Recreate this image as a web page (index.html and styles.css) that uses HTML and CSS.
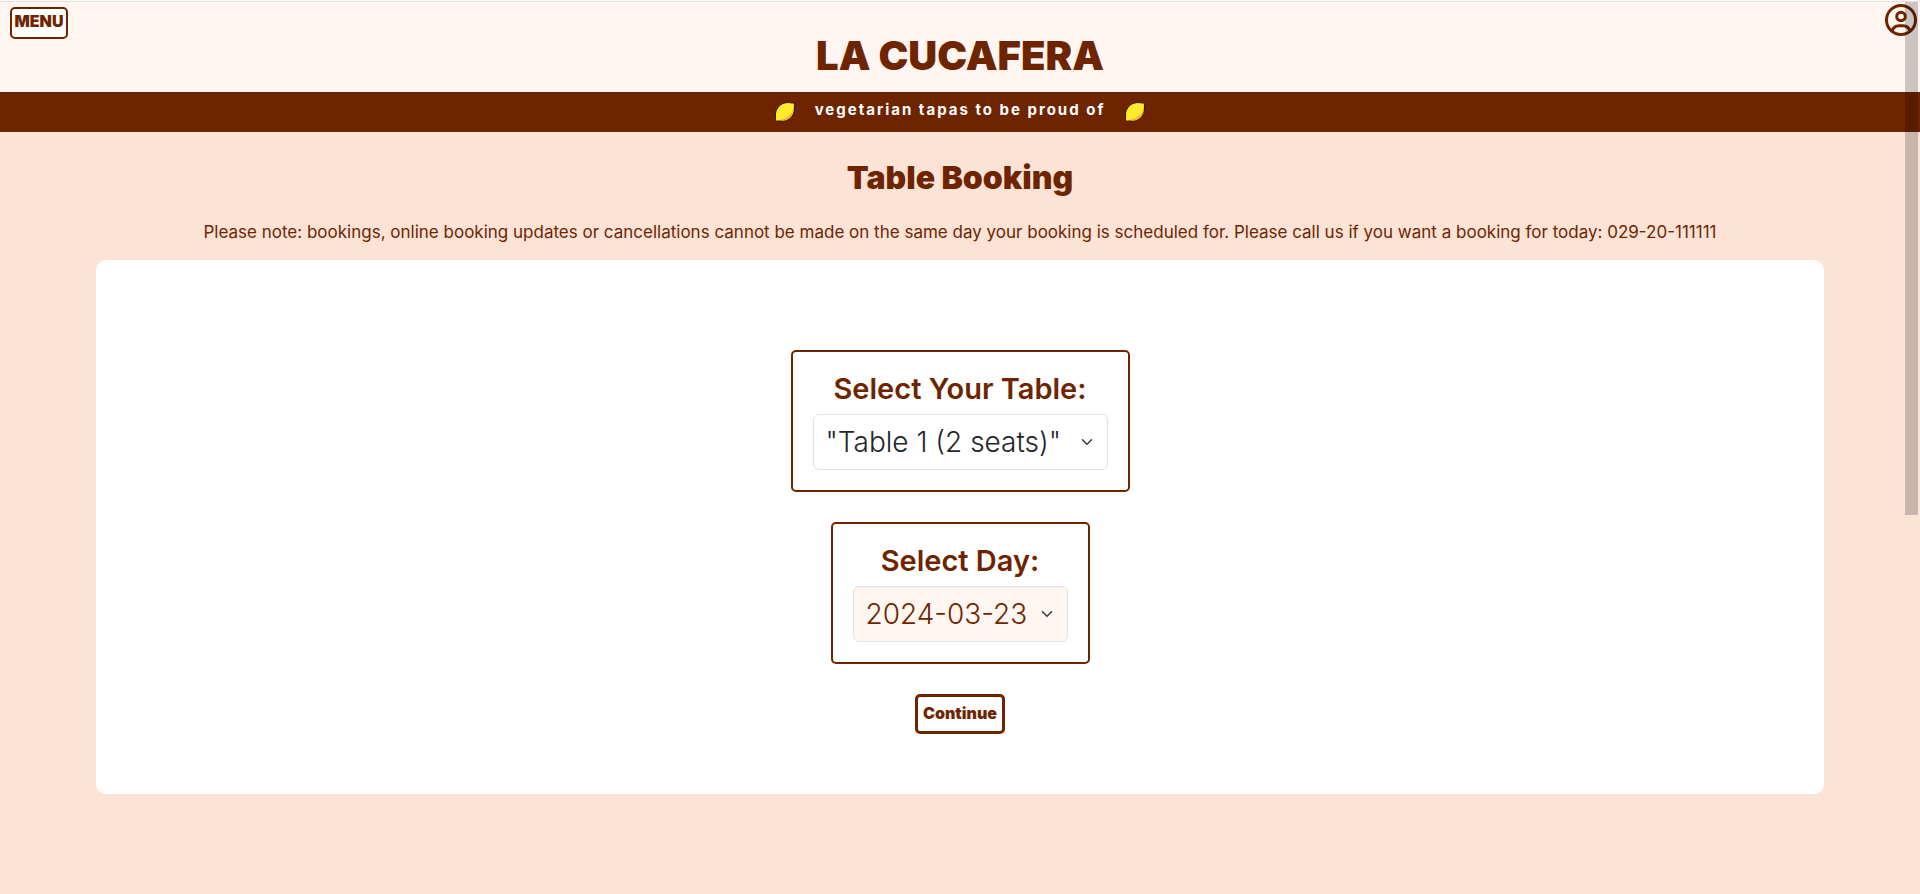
FILE: index.html
```html
<!DOCTYPE html>
<html lang="en">
<head>
<meta charset="utf-8">
<meta name="viewport" content="width=device-width, initial-scale=1">
<title>La Cucafera - Table Booking</title>
<link rel="stylesheet" href="styles.css">
</head>
<body>
<svg class="symbols" aria-hidden="true">
  <symbol id="lemon" viewBox="0 0 20 20">
    <path d="M1 19C0 17.500 .5 16 .5 14C.3 10 1.500 6.500 4.500 3.800C8 .8 12 .2 15.500 1C17 1.300 18.500 .8 19.300 1.200C19.800 2.500 19.200 4 19.500 6C19.700 10 18.500 13.500 15.500 16.200C12 19.300 8 19.800 4.500 19C3 18.700 2 19.300 1 19Z" fill="#f6b13a" stroke="#2d1606" stroke-width="1"/>
    <path d="M1.500 18.400C1 17 1.200 15.500 1 13.800C1 10.200 2.200 6.800 4.900 4.300C8 1.500 12 .9 15.300 1.600C16.800 1.900 17.800 1.500 18.700 1.700C18.700 5 18.600 9 15 12.700C11.500 16.300 8 17.200 4.800 17.800C3.500 18 2.500 18.500 1.500 18.400Z" fill="#ffeb2b"/>
  </symbol>
</svg>
<header class="site-header">
  <button class="menu-button" type="button">MENU</button>
  <a class="brand" href="#">LA CUCAFERA</a>
  <a class="account" href="#" aria-label="Account">
    <svg viewBox="0 0 32 32" fill="none" stroke="currentColor" stroke-width="3">
      <circle cx="16" cy="16" r="14.500"/>
      <circle cx="16" cy="12.500" r="4.300"/>
      <path d="M7 27.500C8 23.500 10.500 21.800 14 21.800H18C21.500 21.800 24 23.500 25 27.500"/>
    </svg>
  </a>
</header>
<div class="banner">
  <svg class="lemon" aria-hidden="true"><use href="#lemon"/></svg>
  <p class="tagline">vegetarian tapas to be proud of</p>
  <svg class="lemon" aria-hidden="true"><use href="#lemon"/></svg>
</div>
<main class="booking">
  <h1 class="title">Table Booking</h1>
  <p class="note">Please note: bookings, online booking updates or cancellations cannot be made on the same day your booking is scheduled for. Please call us if you want a booking for today: 029-20-111111</p>
  <form class="card">
    <div class="field">
      <label class="field-label" for="table">Select Your Table:</label>
      <span class="select-wrap">
        <select class="select select-table" id="table"><option>"Table 1 (2 seats)"</option></select>
        <svg class="chevron" viewBox="0 0 16 16" aria-hidden="true"><path d="m2 5 6 6 6-6"/></svg>
      </span>
    </div>
    <div class="field">
      <label class="field-label" for="day">Select Day:</label>
      <span class="select-wrap">
        <select class="select select-day" id="day"><option>2024-03-23</option></select>
        <svg class="chevron" viewBox="0 0 16 16" aria-hidden="true"><path d="m2 5 6 6 6-6"/></svg>
      </span>
    </div>
    <button class="continue" type="button">Continue</button>
  </form>
</main>
<div class="scroll-thumb" aria-hidden="true"></div>
</body>
</html>
```
FILE: styles.css
```css
:root {
  --brown: #6f2400;
  --cream: #fff6f1;
  --peach: #fce3d6;
  --font: Inter, "Open Sans", sans-serif;
}
* { box-sizing: border-box; }
html { background: var(--cream); }
body {
  margin: 1px 0 0;
  min-height: calc(100vh - 1px);
  background: var(--peach);
  color: var(--brown);
  font-family: var(--font);
  font-size: 17px;
}
.symbols { position: absolute; width: 0; height: 0; }
.site-header {
  display: grid;
  grid-template-columns: 1fr auto 1fr;
  align-items: start;
  padding: 2px 3px 12px;
  border-top: 1px solid #dee2e0;
  background: var(--cream);
}
.menu-button {
  justify-self: start;
  width: 58px;
  height: 32px;
  margin: 3px 0 0 7px;
  padding: 0 0 4px;
  border: 2px solid var(--brown);
  border-radius: 5px;
  background: #fff;
  color: var(--brown);
  font: 900 16px/20px var(--font);
}
.brand {
  padding-top: 28px;
  color: var(--brown);
  font: 900 40px/48px var(--font);
  text-decoration: none;
}
.account { justify-self: end; color: var(--brown); }
.account svg { display: block; width: 32px; height: 32px; }
.banner {
  display: flex;
  align-items: center;
  justify-content: center;
  gap: 20px;
  height: 40px;
  background: var(--brown);
}
.lemon { width: 20px; height: 20px; }
.tagline {
  margin: 0;
  padding-bottom: 4px;
  color: #fff;
  font-size: 15px;
  font-weight: 700;
  line-height: 20px;
  letter-spacing: 2px;
}
.booking { padding: 24px 5% 100px; text-align: center; }
.title {
  margin: 0;
  font: 900 32px/44px var(--font);
}
.note { margin: 0; padding: 20px 0 16px; line-height: 24px; }
.card {
  display: flex;
  flex-direction: column;
  align-items: center;
  gap: 30px;
  padding: 90px 20px 60px;
  border-radius: 10px;
  background: #fff;
}
.field {
  padding: 20px;
  border: 2px solid var(--brown);
  border-radius: 5px;
}
.field-label {
  display: block;
  padding-bottom: 8px;
  font-size: 29px;
  font-weight: 600;
  line-height: 34px;
}
.select-wrap { position: relative; display: block; }
.select {
  display: block;
  height: 56px;
  padding: 0 36px 0 12px;
  border: 1px solid #dee2e6;
  border-radius: 6px;
  appearance: none;
  font: 300 28px/42px var(--font);
}
.select-table { width: 295px; background: #fff; color: #212529; }
.select-day { width: 215px; background: var(--cream); color: var(--brown); }
.chevron {
  position: absolute;
  top: 22px;
  right: 15px;
  width: 12px;
  height: 12px;
  fill: none;
  stroke: #343a40;
  stroke-width: 2;
  stroke-linecap: round;
  stroke-linejoin: round;
  pointer-events: none;
}
.continue {
  width: 90px;
  height: 40px;
  padding: 0 0 3px;
  border: 3px solid var(--brown);
  border-radius: 5px;
  background: #fff;
  color: var(--brown);
  font: 900 16px/20px var(--font);
}
.scroll-thumb {
  position: fixed;
  top: 2px;
  right: 2px;
  width: 13px;
  height: 513px;
  background: rgba(0, 0, 0, 0.2);
}
```
